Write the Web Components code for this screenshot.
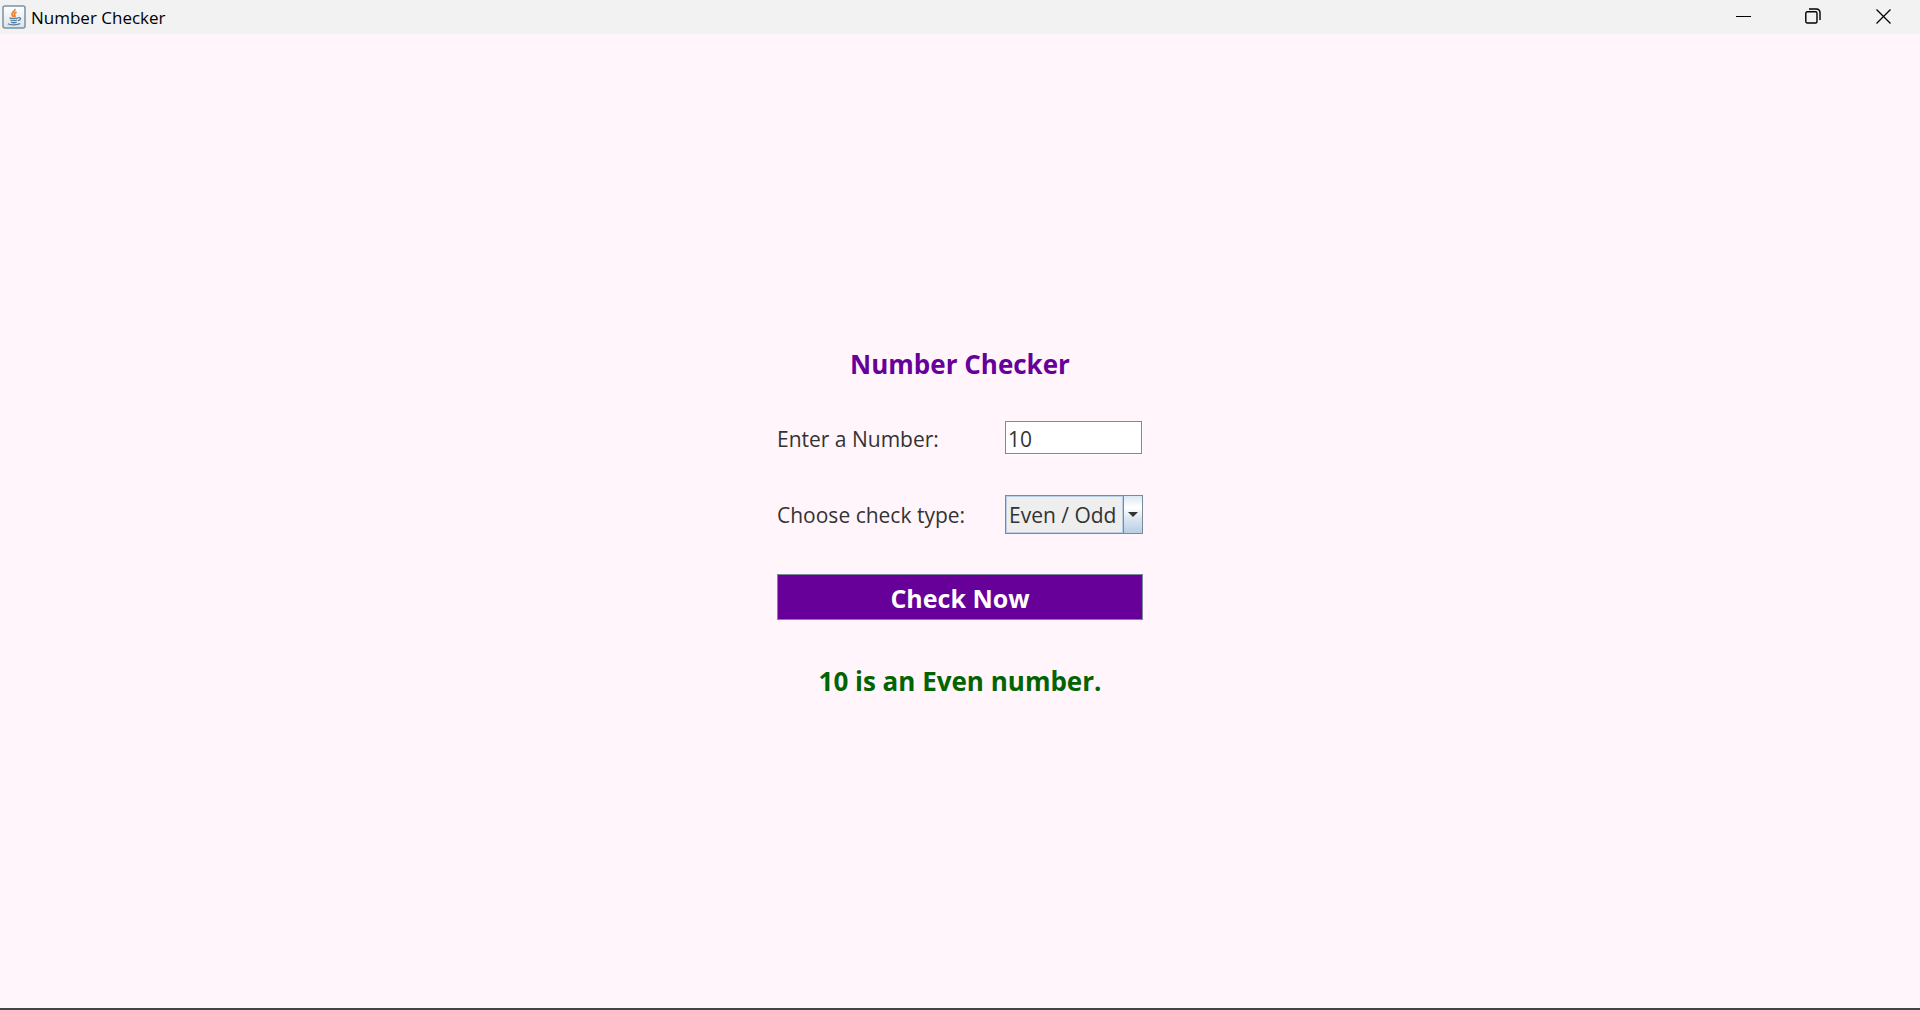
<!DOCTYPE html>
<html lang="en">
<head>
<meta charset="utf-8">
<title>Number Checker</title>
<style>
html, body { height: 100%; }
body { margin: 0; font-family: "Open Sans", "Noto Sans", sans-serif; color: #333; }
</style>
</head>
<body>
<app-window>
  <title-bar slot="bar">Number Checker</title-bar>
  <number-checker></number-checker>
</app-window>

<script>
const attach = (host, html) => {
  host.attachShadow({ mode: 'open' }).innerHTML = html;
};

class AppWindow extends HTMLElement {
  constructor() {
    super();
    attach(this, `
      <style>
        :host { display: flex; flex-direction: column; min-height: 100%; box-sizing: border-box;
          background: #fff5fb; border-bottom: 2px solid #444; }
        main { flex: 1; display: flex; align-items: center; justify-content: center; }
      </style>
      <slot name="bar"></slot>
      <main><slot></slot></main>`);
  }
}

class TitleBar extends HTMLElement {
  constructor() {
    super();
    attach(this, `
      <style>
        :host { display: flex; align-items: center; height: 34px; background: #f2f2f2; color: #000;
          padding: 0 2px; font-size: 17px; }
        .name { flex: 1; padding: 2px 0 0 5px; line-height: 32px; }
        svg { display: block; }
        button { width: 70px; height: 34px; border: 0; padding: 0 0 2px; background: none; color: #000;
          display: flex; align-items: center; justify-content: center; }
      </style>
      <svg width="24" height="24" viewBox="0 0 24 24" aria-hidden="true">
        <defs><linearGradient id="g" x1="0" y1="0" x2="0" y2="1">
          <stop offset="0" stop-color="#fff"/><stop offset="1" stop-color="#dde2e6"/></linearGradient></defs>
        <rect x="1" y="1" width="22" height="22" rx="2" fill="url(#g)" stroke="#7793a8" stroke-width="1.5"/>
        <path d="M12.8 4c1 2-3.6 3.200-2.800 5.600.3.900 1.200 1.500 1.600 2.400M14.600 7.200c-2 .8-3 1.800-1.800 3.100.6.700.2 1.300-.4 1.900" fill="none" stroke="#ee8130" stroke-width="1.800"/>
        <path d="M7.500 12.800c1.800.9 6.500.9 8.700 0M8.300 15c1.800.7 5.400.7 7 0M9 17.200c1.600.6 4.200.6 5.600 0M16.300 12.700c3-.8 2.900 2.200-.3 3M6 18.800c1.800 1.400 9.800 1.400 12.200-.3" fill="none" stroke="#5580a3" stroke-width="1.300"/>
      </svg>
      <span class="name"><slot></slot></span>
      <button type="button" aria-label="Minimize"><svg width="15" height="15" viewBox="0 0 15 15"><path d="M0 7.500h15" stroke="currentColor"/></svg></button>
      <button type="button" aria-label="Restore"><svg width="16" height="16" viewBox="0 0 16 16" fill="none" stroke="currentColor" stroke-width="1.400"><rect x=".8" y="3.800" width="11.200" height="11.200" rx="1.500"/><path d="M4 1h7.500a3.500 3.500 0 0 1 3.500 3.500V12"/></svg></button>
      <button type="button" aria-label="Close"><svg width="15" height="15" viewBox="0 0 15 15"><path d="M.5.5l14 14M14.500.5l-14 14" stroke="currentColor" stroke-width="1.300"/></svg></button>`);
  }
}

class NumberChecker extends HTMLElement {
  constructor() {
    super();
    attach(this, `
      <style>
        :host { display: block; }
        form { display: grid; grid-template-columns: 188px 138px; gap: 40px; align-items: center; }
        h1, output, button { grid-column: 1 / -1; text-align: center; }
        h1, output { margin: 0; font-size: 26px; line-height: 34px; font-weight: 700; }
        h1 { padding-top: 2px; color: #609; }
        output { padding-top: 4px; color: #006400; }
        label { padding-top: 2px; font-size: 21px; line-height: 32px; white-space: nowrap; }
        input, select { font: inherit; font-size: 21px; color: #333; box-sizing: border-box; margin: 0; border-radius: 0; }
        input { width: 137px; height: 33px; padding: 2px 2px 0; border: 1px solid #7a8a99;
          background: #fff; box-shadow: 1px 1px 0 #fff; }
        .combo { display: flex; height: 39px; box-sizing: border-box; border: 1px solid #7a8a99; }
        select { appearance: none; flex: 1; min-width: 0; padding: 1px 0 0 2px;
          border: 1px solid #b8cfe5; background: #eee; }
        .arrow { width: 18px; border-left: 1px solid #7a8a99; display: flex; align-items: center; justify-content: center;
          background: linear-gradient(#dde8f3, #fff 30%, #fff 32%, #dbe6f1 60%, #b8cfe5); }
        button { height: 46px; padding: 2px 0 0; border: 1px solid #7a8a99; background: #609; color: #fff;
          font: inherit; font-size: 25px; line-height: 40px; font-weight: 700; }
      </style>
      <form>
        <h1>Number Checker</h1>
        <label for="number">Enter a Number:</label>
        <input id="number" type="text" inputmode="numeric" value="10">
        <label for="kind">Choose check type:</label>
        <div class="combo">
          <select id="kind"><option>Even / Odd</option></select>
          <span class="arrow" aria-hidden="true"><svg width="10" height="5" viewBox="0 0 10 5"><path d="M0 0h10L5 5z" fill="#333"/></svg></span>
        </div>
        <button type="submit">Check Now</button>
        <output for="number kind">10 is an Even number.</output>
      </form>`);
    const root = this.shadowRoot;
    root.querySelector('form').addEventListener('submit', (event) => {
      event.preventDefault();
      const value = Number(root.querySelector('#number').value);
      root.querySelector('output').textContent =
        value % 2 === 0 ? `${value} is an Even number.` : `${value} is an Odd number.`;
    });
  }
}

customElements.define('app-window', AppWindow);
customElements.define('title-bar', TitleBar);
customElements.define('number-checker', NumberChecker);
</script>
</body>
</html>
